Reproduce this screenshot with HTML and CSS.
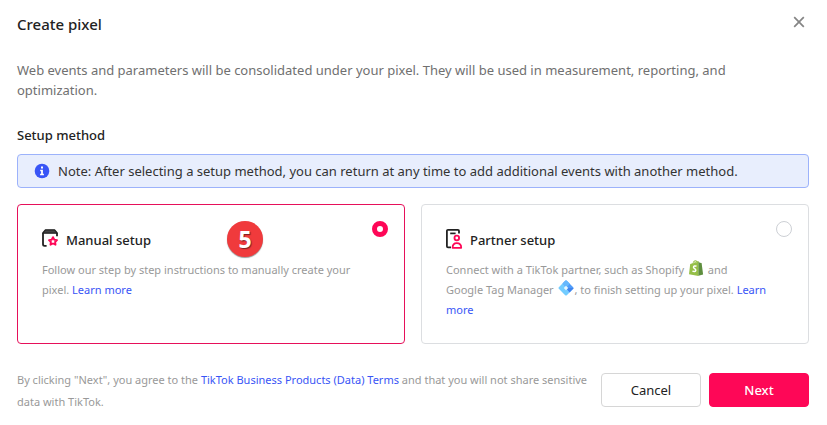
FILE: index.html
```html
<!DOCTYPE html>
<html lang="en">
<head>
<meta charset="utf-8">
<meta name="viewport" content="width=device-width, initial-scale=1">
<title>Create pixel</title>
<link rel="stylesheet" href="styles.css">
</head>
<body>
<form class="dialog">
  <header class="dialog-header">
    <h1 class="title">Create pixel</h1>
    <button class="close" type="button" aria-label="Close">
      <svg width="12" height="12" viewBox="0 0 12 12" fill="none" stroke="#858585" stroke-width="1.700"><path d="M1.200 1.200l9.600 9.600M10.800 1.200l-9.600 9.600"/></svg>
    </button>
  </header>

  <p class="intro">Web events and parameters will be consolidated under your pixel. They will be used in measurement, reporting, and optimization.</p>

  <h2 class="section-title">Setup method</h2>
  <div class="note">
    <svg width="16" height="16" viewBox="0 0 16 16"><circle cx="8" cy="8" r="7.3" fill="#3955f6"/><path d="M7 3.6h2v1.8H7zM6.2 6.8h2.7v4h1v1.4H6.1v-1.4h1V8.2h-.9z" fill="#fff"/></svg>
    <span>Note: After selecting a setup method, you can return at any time to add additional events with another method.</span>
  </div>

  <div class="methods">
    <section class="card card-selected">
      <div class="card-head">
        <svg class="card-icon" width="18" height="20" viewBox="0 0 18 20" fill="none">
          <path d="M3.400.8h9.200L15 3.600v.6H1v-.6z" fill="#444" stroke="#222" stroke-width="1.300" stroke-linejoin="round"/>
          <path d="M1 3.800v11.400c0 1 .6 1.600 1.600 1.600h2M15 3.800v3.400" stroke="#222" stroke-width="1.800"/>
          <path d="M11 8.200l1.300 2.500 2.700.4-1.900 1.900.4 2.700-2.500-1.200-2.500 1.200.4-2.700L7 11.100l2.700-.4z" stroke="#fe0757" stroke-width="1.900" stroke-linejoin="round"/>
        </svg>
        <label class="card-title" for="manual">Manual setup</label>
        <span class="step">5</span>
        <input class="radio" type="radio" id="manual" name="method" checked>
      </div>
      <p class="card-text">Follow our step by step instructions to manually create your pixel. <a href="#manual">Learn more</a></p>
    </section>

    <section class="card">
      <div class="card-head">
        <svg class="card-icon" width="18" height="20" viewBox="0 0 18 20" fill="none">
          <path d="M13 4.400V2c0-.7-.4-1.100-1.100-1.100H2C1.300.9.900 1.300.9 2v15.200c0 .7.400 1.100 1.100 1.100h3" stroke="#222" stroke-width="1.800"/>
          <path d="M4.200 4.400h5.400" stroke="#222" stroke-width="1.700"/>
          <circle cx="10.800" cy="9" r="2.300" stroke="#fe0757" stroke-width="1.800"/>
          <path d="M6.600 18.800c0-3 1.500-4.600 4.200-4.600s4.400 1.600 4.400 4.600z" stroke="#fe0757" stroke-width="1.800" stroke-linejoin="round"/>
        </svg>
        <label class="card-title" for="partner">Partner setup</label>
        <input class="radio" type="radio" id="partner" name="method">
      </div>
      <p class="card-text">Connect with a TikTok partner, such as Shopify
        <svg class="brand" width="16" height="16" viewBox="0 0 16 16" role="img" aria-label="Shopify logo"><path d="M2.200 4l2.400-.7C5 1.400 6.300.2 7.600.3c.7 0 1.100.5 1.500 1l1.400-.3v15L1 14.200z" fill="#95bf47"/><path d="M10.400 1.400l1.400 1.300 1.800.2 1.500 11.600-4.700 1.300z" fill="#5e8e3e"/><path d="M5.700 3.200c.3-1 1-1.700 1.800-1.800.4.200.5.700.5 1.200" fill="none" stroke="#fff" stroke-width=".7"/><path d="M8.500 6.300c-1.500-.7-3-.2-3 .9 0 1.500 2.500 1.600 2.300 3.200-.2 1.400-2 1.500-3.300.5" fill="none" stroke="#fff" stroke-width="1.500"/></svg>
        and Google&nbsp;Tag&nbsp;Manager
        <svg class="brand" width="16" height="16" viewBox="0 0 16 16" role="img" aria-label="Google Tag Manager logo"><path d="M7.200.8L.8 7.200c-.5.500-.5 1.100 0 1.600l6.400 6.400c.5.500 1.100.5 1.600 0L11.500 12.500 4.500 3.500z" fill="#73ccff"/><path d="M4.500 3.500L7.200.8c.5-.5 1.100-.5 1.600 0l6.400 6.400c.5.500.5 1.100 0 1.600L11.500 12.500z" fill="#4f9cfa"/><path d="M4.500 3.500L7.200.8c.5-.5 1.100-.5 1.600 0l3 3L8 8z" fill="#66b8fd"/><path d="M11.500 12.500L8 8h7.500c0 .3-.1.600-.3.800z" fill="#3f85ee"/><path d="M8 5.800L10.200 8 8 10.200 5.800 8z" fill="#e8f8ff"/></svg>, to finish setting up your pixel. <a href="#partner">Learn more</a></p>
    </section>
  </div>

  <footer class="dialog-footer">
    <p class="terms">By clicking "Next", you agree to the <a href="#terms">TikTok Business Products (Data) Terms</a> and that you will not share sensitive data with TikTok.</p>
    <button class="button" type="button">Cancel</button>
    <button class="button button-primary" type="submit">Next</button>
  </footer>
</form>
</body>
</html>
```
FILE: styles.css
```css
* {
  box-sizing: border-box;
}

body {
  margin: 0;
  background: #fff;
  color: #222;
  font-family: "Noto Sans", "Open Sans", sans-serif;
  font-size: 13px;
  line-height: 20px;
}

h1, h2, p {
  margin: 0;
}

a {
  color: #3955f6;
  text-decoration: none;
}

.dialog {
  padding: 12px 18px 16px 17px;
}

.dialog-header {
  display: flex;
  align-items: flex-start;
  justify-content: space-between;
  padding-right: 4px;
  margin-bottom: 24px;
}

.title {
  font-size: 15px;
  font-weight: 500;
  line-height: 24px;
}

.close {
  display: flex;
  margin-top: 4px;
  padding: 0;
  border: 0;
  background: none;
}

.intro {
  padding-right: 32px;
  color: #707070;
  margin-bottom: 24px;
}

.section-title {
  font-size: 13px;
  font-weight: 500;
  line-height: 22px;
  margin-bottom: 8px;
}

.note {
  display: flex;
  align-items: center;
  gap: 8px;
  min-height: 34px;
  padding: 4px 16px;
  margin-bottom: 16px;
  border: 1px solid #9cb2fb;
  border-radius: 4px;
  background: #e8eefd;
  color: #333;
}

.note svg {
  flex: none;
}

.methods {
  display: grid;
  grid-template-columns: 1fr 1fr;
  gap: 16px;
  margin-bottom: 25px;
}

.card {
  min-height: 140px;
  padding: 16px 16px 20px 24px;
  border: 1px solid #dcdee1;
  border-radius: 4px;
}

.card-selected {
  border-color: #e6105a;
}

.card-head {
  position: relative;
  display: flex;
  align-items: center;
  min-height: 38px;
  margin-bottom: 1px;
}

.card-icon {
  flex: none;
  margin: 0 6px 2px 0;
}

.card-title {
  font-weight: 500;
}

.step {
  position: absolute;
  left: 185px;
  top: 0;
  width: 36px;
  height: 36px;
  border-radius: 50%;
  background: #f03a3c;
  color: #fff;
  font-family: "Open Sans", sans-serif;
  font-size: 23px;
  font-weight: 700;
  line-height: 36px;
  text-align: center;
  text-shadow: 1px 1px 1px #7a2020;
  box-shadow: 0 1px 1px #999;
}

.radio {
  appearance: none;
  align-self: flex-start;
  width: 16px;
  height: 16px;
  margin: 0 0 0 auto;
  border: 1px solid #cdd0d5;
  border-radius: 50%;
  background: #fff;
}

.radio:checked {
  border: 5px solid #fe0757;
}

.card-text {
  padding-right: 18px;
  color: #999;
  font-size: 11px;
}

.brand {
  margin: 0 1px;
  vertical-align: -2px;
}

.dialog-footer {
  display: flex;
  align-items: flex-start;
}

.terms {
  flex: 1;
  color: #999;
  font-size: 11px;
  line-height: 22px;
}

.button {
  flex: none;
  width: 100px;
  height: 34px;
  margin-top: 4px;
  border: 1px solid #d6d6d6;
  border-radius: 4px;
  background: #fff;
  color: #222;
  font: inherit;
}

.button-primary {
  margin-left: 8px;
  border-color: #fe0757;
  background: #fe0757;
  color: #fff;
  font-weight: 500;
}
```
